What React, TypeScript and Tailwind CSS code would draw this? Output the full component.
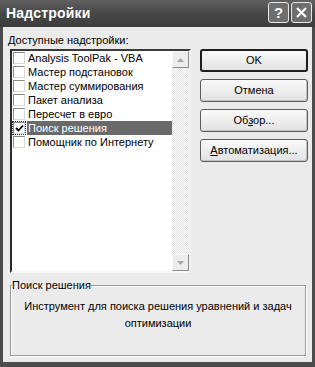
import React from "react";

const addins = [
  { name: "Analysis ToolPak - VBA", checked: false },
  { name: "Мастер подстановок", checked: false },
  { name: "Мастер суммирования", checked: false },
  { name: "Пакет анализа", checked: false },
  { name: "Пересчет в евро", checked: false },
  { name: "Поиск решения", checked: true, selected: true },
  { name: "Помощник по Интернету", checked: false },
];

const ScrollBtn: React.FC<{ up?: boolean }> = ({ up }) => (
  <div className="w-[17px] h-[17px] bg-[#ececec] border border-[#f8f8f8] border-r-[#8c8c8c] border-b-[#8c8c8c] flex items-center justify-center">
    <svg width="7" height="4" viewBox="0 0 7 4">
      <path d={up ? "M0 4 L3.5 0 L7 4 Z" : "M0 0 L3.5 4 L7 0 Z"} fill="#a8a8a8" />
    </svg>
  </div>
);

const Btn: React.FC<{ children: React.ReactNode; isDefault?: boolean }> = ({ children, isDefault }) => (
  <button
    className={`h-[23px] w-[108px] rounded-[3px] bg-gradient-to-b from-[#fafafa] to-[#e2e2e2] text-[11px] text-black ${
      isDefault ? "border-2 border-[#1e1e1e]" : "border border-[#5c5c5c] shadow-[inset_-1px_-1px_0_#c4c4c4]"
    }`}
  >
    {children}
  </button>
);

export default function App() {
  return (
    <div className="w-[315px] h-[367px] bg-[#4c4c4c] flex flex-col font-['Liberation_Sans',sans-serif] text-black">
      {/* заголовок */}
      <div className="h-[27px] flex items-center justify-between pl-[6px] pr-[3px] bg-gradient-to-b from-[#606060] via-[#474747] to-[#3c3c3c]">
        <span className="text-white font-bold text-[14px] tracking-[0.2px]">Надстройки</span>
        <div className="flex gap-[2px] mt-[-2px]">
          <div className="w-[21px] h-[21px] rounded-[3px] border border-[#e8e8e8] bg-[#6e6e6e] flex items-center justify-center text-white font-bold text-[15px] leading-none">
            ?
          </div>
          <div className="w-[21px] h-[21px] rounded-[3px] border border-[#e8e8e8] bg-[#6e6e6e] flex items-center justify-center">
            <svg width="13" height="13" viewBox="0 0 13 13">
              <path d="M2 2 L11 11 M11 2 L2 11" stroke="#fff" strokeWidth="2.2" />
            </svg>
          </div>
        </div>
      </div>

      {/* тело окна */}
      <div className="flex-1 mx-[3px] mb-[5px] bg-[#ebebeb] flex flex-col pt-[7px] pl-[5px]">
        <div className="text-[11px] leading-[13px]">
          <span className="underline">Д</span>оступные надстройки:
        </div>

        <div className="flex mt-[2px] ml-[2px]">
          <div className="w-[181px] h-[224px] border-2 border-t-[#3a3a3a] border-l-[#2a2a2a] border-b-[#fafafa] border-r-[#f0f0f0] bg-white flex">
            <div className="flex-1 flex flex-col">
              {addins.map((a) => (
                <div key={a.name} className="h-[14px] flex items-center">
                  <div
                    className={`ml-[1px] w-[12px] h-[12px] flex items-center justify-center bg-white border border-[#8a8a8a] border-r-[#d8d8d8] border-b-[#d8d8d8] ${
                      a.selected ? "outline outline-1 outline-dotted outline-[#333]" : ""
                    }`}
                  >
                    {a.checked && (
                      <svg width="9" height="9" viewBox="0 0 9 9">
                        <path d="M1 4 L3.5 6.5 L8 1.5" stroke="#000" strokeWidth="1.8" fill="none" />
                      </svg>
                    )}
                  </div>
                  <span
                    className={`ml-[2px] px-[1px] h-[14px] flex-1 text-[11px] leading-[14px] whitespace-nowrap ${
                      a.selected ? "bg-[#6a6a6a] text-white" : ""
                    }`}
                  >
                    {a.name}
                  </span>
                </div>
              ))}
            </div>
            <div className="w-[17px] flex flex-col justify-between bg-[repeating-conic-gradient(#e4e4e4_0%_25%,#fbfbfb_0%_50%)] bg-[length:2px_2px]">
              <ScrollBtn up />
              <ScrollBtn />
            </div>
          </div>

          <div className="ml-[9px] flex flex-col gap-[7px]">
            <Btn isDefault>OK</Btn>
            <Btn>Отмена</Btn>
            <Btn>
              Об<span className="underline">з</span>ор...
            </Btn>
            <Btn>
              <span className="underline">А</span>втоматизация...
            </Btn>
          </div>
        </div>

        <fieldset className="mt-[6px] ml-[2px] w-[296px] h-[77px] border border-[#9a9a9a] shadow-[1px_1px_0_#fff,inset_1px_1px_0_#fff] px-0 pb-0">
          <legend className="ml-[1px] px-0 text-[11px] leading-[13px]">Поиск решения</legend>
          <div className="mt-[6px] text-center text-[11px] leading-[17px]">
            Инструмент для поиска решения уравнений и задач
            <br />
            оптимизации
          </div>
        </fieldset>
      </div>
    </div>
  );
}
